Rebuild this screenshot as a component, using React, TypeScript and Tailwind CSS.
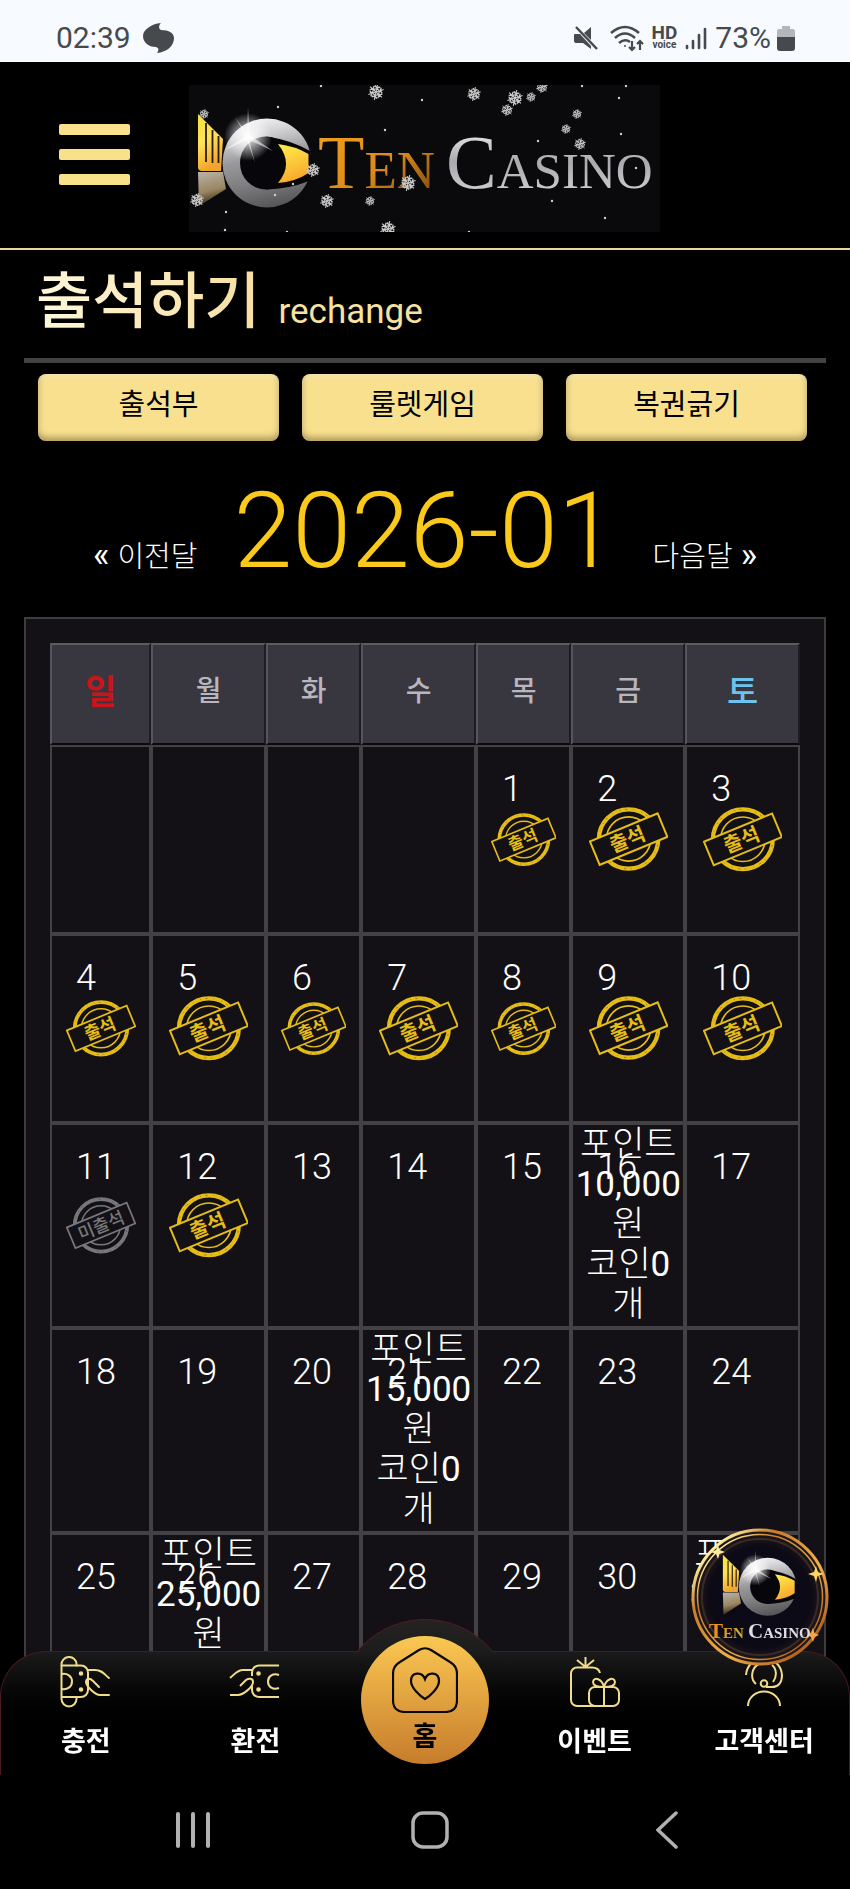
import React from 'react';

type Stamp = 'attend' | 'absent';

interface Day {
  day: number | null;
  stamp?: Stamp;
  reward?: string;
}

const blank: Day = { day: null };

const weeks: Day[][] = [
  [
    blank,
    blank,
    blank,
    blank,
    { day: 1, stamp: 'attend' },
    { day: 2, stamp: 'attend' },
    { day: 3, stamp: 'attend' },
  ],
  [4, 5, 6, 7, 8, 9, 10].map((day) => ({ day, stamp: 'attend' as Stamp })),
  [
    { day: 11, stamp: 'absent' },
    { day: 12, stamp: 'attend' },
    { day: 13 },
    { day: 14 },
    { day: 15 },
    { day: 16, reward: '10,000' },
    { day: 17 },
  ],
  [
    { day: 18 },
    { day: 19 },
    { day: 20 },
    { day: 21, reward: '15,000' },
    { day: 22 },
    { day: 23 },
    { day: 24 },
  ],
  [
    { day: 25 },
    { day: 26, reward: '25,000' },
    { day: 27 },
    { day: 28 },
    { day: 29 },
    { day: 30 },
    { day: 31, reward: '30,000' },
  ],
];

const weekdays = [
  { label: '일', className: 'w-[13.5%] text-[34px] font-bold text-[#c8151b]' },
  { label: '월', className: 'w-[15.3%] text-[28px] font-medium text-[#b9b7bd]' },
  { label: '화', className: 'w-[12.7%] text-[28px] font-medium text-[#b9b7bd]' },
  { label: '수', className: 'w-[15.3%] text-[28px] font-medium text-[#b9b7bd]' },
  { label: '목', className: 'w-[12.7%] text-[28px] font-medium text-[#b9b7bd]' },
  { label: '금', className: 'w-[15.2%] text-[28px] font-medium text-[#b9b7bd]' },
  { label: '토', className: 'w-[15.3%] text-[34px] font-medium text-[#6cc3ee]' },
];

const flakes = [
  [15, 29, 5], [8, 115, 7], [187, 7, 8], [285, 9, 7], [326, 13, 8], [318, 25, 6], [342, 12, 5], [353, 2, 6],
  [388, 29, 5], [377, 44, 5], [391, 59, 6], [124, 85, 7], [219, 98, 8], [138, 116, 7], [181, 116, 5], [199, 144, 8],
];

const specks = [
  [132, 1], [89, 22], [196, 45], [233, 15], [430, 13], [432, 49], [447, 83], [363, 116], [416, 133], [349, 56],
  [86, 110], [37, 127], [36, 145], [104, 99], [98, 147], [280, 147], [393, 1], [437, 1],
];

// Snowflakes drifting over the logo
const Flake = ({ x, y, r }: { x: number; y: number; r: number }) => (
  <g transform={`translate(${x} ${y}) scale(${r / 10})`} stroke="#c9c9c9" strokeWidth="1.5" fill="none">
    {[0, 60, 120, 180, 240, 300].map((a) => (
      <path key={a} d="M0 0V-10M0 -5L-3 -8M0 -5L4 -7M-2 -2L-5 -4" transform={`rotate(${a + 12})`} />
    ))}
    <circle r="4" strokeDasharray="3 1" />
    <circle r="7" strokeDasharray="2 3" />
  </g>
);

const Fish = ({ id }: { id: string }) => (
  <g>
    <defs>
      <linearGradient id={`${id}-tail`} x1="0" y1="0" x2="0.3" y2="1">
        <stop offset="0" stopColor="#f3e43c" />
        <stop offset="0.5" stopColor="#ffe35a" />
        <stop offset="1" stopColor="#f0a62c" />
      </linearGradient>
      <linearGradient id={`${id}-fin`} x1="0" y1="0" x2="0.2" y2="1">
        <stop offset="0" stopColor="#b9b3a8" />
        <stop offset="0.6" stopColor="#9a8763" />
        <stop offset="1" stopColor="#3a2c14" />
      </linearGradient>
      <linearGradient id={`${id}-ring`} x1="0.3" y1="0" x2="0.5" y2="1">
        <stop offset="0" stopColor="#f4f4f4" />
        <stop offset="0.2" stopColor="#cfcfd1" />
        <stop offset="0.45" stopColor="#99999c" />
        <stop offset="0.7" stopColor="#808083" />
        <stop offset="1" stopColor="#565659" />
      </linearGradient>
      <radialGradient id={`${id}-glow`}>
        <stop offset="0" stopColor="#fff" />
        <stop offset="0.35" stopColor="#fff" stopOpacity="0.65" />
        <stop offset="1" stopColor="#fff" stopOpacity="0" />
      </radialGradient>
      <linearGradient id={`${id}-eye`} x1="0" y1="0" x2="0.3" y2="1">
        <stop offset="0" stopColor="#fff04c" />
        <stop offset="1" stopColor="#f8a92e" />
      </linearGradient>
    </defs>
    <path d="M9 29L34 54L32 86H13Q9 86 9 82Z" fill={`url(#${id}-tail)`} />
    <path d="M17 38V77M23.500 45V78M29.500 51V78" stroke="#2a1c06" strokeWidth="1.800" />
    <path d="M9 87H34L37 104L10 121Z" fill={`url(#${id}-fin)`} />
    <circle cx="78" cy="78" r="44.5" fill={`url(#${id}-ring)`} />
    <ellipse cx="77" cy="78" rx="26" ry="26.500" fill="#07060a" />
    <path d="M77 51.500Q102 55 121 66L124 78L120 96Q100 104 77 104.500Z" fill="#07060a" />
    <path d="M89 59Q106 61 119.500 69V88Q106 97 89 98Q105 79 89 59Z" fill={`url(#${id}-eye)`} />
    <circle cx="59" cy="52" r="24" fill={`url(#${id}-glow)`} />
    <path d="M59 22L60.500 50L84 66L60 55L66 78L58 55L34 66L57 51L46 32L58 49Z" fill="#fff" opacity="0.55" />
  </g>
);

const Logo = () => (
  <svg viewBox="0 0 471 147" className="w-full max-w-[471px] bg-[#0a090c]" role="img" aria-label="Ten Casino">
    <defs>
      <linearGradient id="logo-ten" x1="0" y1="0" x2="1" y2="1">
        <stop offset="0" stopColor="#f2a41f" />
        <stop offset="0.55" stopColor="#dc8a18" />
        <stop offset="1" stopColor="#6f430b" />
      </linearGradient>
      <linearGradient id="logo-casino" x1="0" y1="0" x2="0" y2="1">
        <stop offset="0" stopColor="#ffffff" />
        <stop offset="0.5" stopColor="#a9a9ad" />
        <stop offset="1" stopColor="#dcdcde" />
      </linearGradient>
    </defs>
    <Fish id="logo" />
    <g fontFamily="'Liberation Serif', serif">
      <text x="129" y="103" fontSize="76" fill="url(#logo-ten)">
        T<tspan fontSize="53">EN</tspan>
      </text>
      <text x="257" y="103" fontSize="76" fill="url(#logo-casino)">
        C<tspan fontSize="51">ASINO</tspan>
      </text>
    </g>
    {flakes.map(([x, y, r]) => (
      <Flake key={`${x}-${y}`} x={x} y={y} r={r} />
    ))}
    {specks.map(([x, y]) => (
      <circle key={`${x}-${y}`} cx={x} cy={y} r="1.2" fill="#cfcfcf" />
    ))}
  </svg>
);

const StampMark = ({ type }: { type: Stamp }) => {
  const color = type === 'attend' ? '#e6bd17' : '#78777b';
  return (
    <svg
      viewBox="0 0 240 195"
      className="mx-auto block w-[72%]"
      role="img"
      aria-label={type === 'attend' ? '출석' : '미출석'}
    >
      <circle cx="120" cy="97" r="90" fill="none" stroke={color} strokeWidth="13" />
      <circle
        cx="120"
        cy="97"
        r="90"
        fill="none"
        stroke="#131115"
        strokeWidth="3"
        strokeDasharray="3 14 6 19 2 22"
        opacity="0.4"
      />
      <circle cx="120" cy="97" r="67" fill="none" stroke={color} strokeWidth="5" />
      <g transform="rotate(-22.5 120 97)">
        <rect x="9" y="59" width="222" height="77" fill="#131115" stroke={color} strokeWidth="6" />
        <text
          x={type === 'attend' ? 116 : 120}
          y={type === 'attend' ? 118 : 119}
          textAnchor="middle"
          fontSize="60"
          fontWeight={type === 'attend' ? 700 : 500}
          fill={color}
        >
          {type === 'attend' ? '출석' : '미출석'}
        </text>
      </g>
    </svg>
  );
};

const StatusBar = () => (
  <div className="flex h-[62px] items-center justify-between bg-[#f7fafe] pr-[55px] pl-14 pt-3.5 text-[30px] leading-none text-[#474a4d]">
    <div className="flex items-center gap-3">
      <span>02:39</span>
      <svg viewBox="0 0 32 30" className="h-[30px] w-8" fill="currentColor">
        <path d="M18 0C15 3 16 6 18 7C26 7 31 10 31 15C31 23 24 29 14 30C16 27 16 25 13 24C5 24 0 19 0 13C0 7 8 1 18 0Z" />
      </svg>
    </div>
    <div className="flex items-center gap-2">
      <svg viewBox="0 0 24 24" className="mr-1 size-6" fill="currentColor">
        <path d="M0 9Q0 8 1 8H6L17 20V23L9 17H2Q0 17 0 15Z" />
        <path d="M10 7L17 1V14Z" />
        <path d="M2 1L23 23" stroke="currentColor" strokeWidth="2.500" />
      </svg>
      <svg viewBox="0 0 34 27" className="h-[27px] w-[34px]" fill="none" stroke="currentColor" strokeWidth="2.600">
        <path d="M1 8Q15 -4 29 8M5 13Q15 4 25 13M9 18Q15 13 20 17" />
        <circle cx="15" cy="21" r="1" fill="currentColor" stroke="none" />
        <path d="M22 16V25M19 22L22 25L25 22M30 25V16M27 19L30 16L33 19" strokeWidth="2.200" />
      </svg>
      <div className="flex flex-col items-center font-bold">
        <span className="text-[19px] leading-[14px]">HD</span>
        <span className="text-[10px] leading-[10px]">voice</span>
      </div>
      <svg viewBox="0 0 22 23" className="h-[23px] w-[22px]" stroke="currentColor" strokeWidth="2.600" strokeLinecap="round">
        <path d="M2 19V21M8 14V21M14 8V21M20 2V21" />
      </svg>
      <div className="flex items-center gap-1.5">
        <span>73%</span>
        <svg viewBox="0 0 18 25" className="h-[25px] w-[18px]">
          <path d="M5 0H13V3H16Q18 3 18 6V11H0V6Q0 3 2 3H5Z" fill="#b3b6ba" />
          <path d="M0 11H18V22Q18 25 15 25H3Q0 25 0 22Z" fill="currentColor" />
        </svg>
      </div>
    </div>
  </div>
);

const DayCell: React.FC<Day> = ({ day, stamp, reward }) => (
  <td className="relative border-2 border-[#444145] p-0 align-middle">
    {day && <span className="absolute top-[22px] left-6 text-[36px] leading-10 font-light">{day}</span>}
    {stamp && <StampMark type={stamp} />}
    {reward && (
      <div className="pb-px text-center text-[35px] leading-10 font-light">
        <p>포인트</p>
        <p className="font-normal">{reward}</p>
        <p>원</p>
        <p>
          코인<b className="font-normal">0</b>
        </p>
        <p>개</p>
      </div>
    )}
  </td>
);

const iconClass = 'size-[52px] fill-none stroke-[#f0dc8c] stroke-2';

const DepositIcon = () => (
  <svg viewBox="0 0 52 52" className={iconClass} strokeLinecap="round">
    <path d="M1.500 43V9A7.500 7.500 0 0 1 16.500 8V9.500M1.500 43A7.500 7.500 0 0 0 16.500 43V41" />
    <path d="M2 9.500H21A7 7 0 0 1 28 16.500V34A7 7 0 0 1 21 41H2" />
    <path d="M2 18C7 17 12 20 12 25.500S7 34 2 33" />
    <path d="M28 14H35C42 14 44 18 49 22M49 39H40C35 39 26 30 26 26C26 22 30 22 33 25L39 31" />
    <circle cx="21" cy="17.500" r="1.300" fill="#f0dc8c" />
    <circle cx="21" cy="33.500" r="1.300" fill="#f0dc8c" />
  </svg>
);

const WithdrawIcon = () => (
  <svg viewBox="0 0 52 52" className={iconClass}>
    <path d="M50 9.500H30A7 7 0 0 0 23 16.500V20M23 30V34A7 7 0 0 0 30 41H50" />
    <path d="M50 19C44 17 39 20 39 25.500S44 34 50 32" />
    <path d="M1 22C6 18 8 14 14 14H23M1 39H9C14 39 24 31 24 26C24 22 20 22 17 24L11 30" />
    <circle cx="29.500" cy="17.500" r="1.300" fill="#f0dc8c" />
    <circle cx="29.500" cy="33.500" r="1.300" fill="#f0dc8c" />
  </svg>
);

const EventIcon = () => (
  <svg viewBox="0 0 52 52" className={iconClass}>
    <path d="M31 17C30 13 27 11.500 23 11.500H8A6 6 0 0 0 2 17.500V44A6 6 0 0 0 8 50H26M16.500 11V1M16.500 11L8 4M16.500 11L25 4" />
    <rect x="20" y="31" width="30" height="19" rx="6" />
    <path d="M35 31V50M35 31C33 23 25 20 24 26C24 29 27 31 35 31C43 31 46 29 46 26C45 20 37 23 35 31Z" />
  </svg>
);

const SupportIcon = () => (
  <svg viewBox="0 0 52 52" className={iconClass}>
    <path d="M8 19A18 18 0 0 1 26 2A18 18 0 0 1 44 19C44 27 40 31 34 31H28" />
    <path d="M18 28C12 23 13 12 21 8M35 26C39 21 39 13 34 9" />
    <circle cx="26" cy="27.500" r="3.300" />
    <path d="M10 50A16 14.500 0 0 1 42 50" />
  </svg>
);

const FloatingBadge = () => (
  <a href="#chat" aria-label="Ten Casino" className="fixed right-[21px] bottom-[223px] z-20 size-[138px]">
    <svg viewBox="0 0 138 138" className="size-full">
      <defs>
        <linearGradient id="badge-rim" x1="0" y1="0" x2="1" y2="1">
          <stop offset="0" stopColor="#b5651d" />
          <stop offset="0.14" stopColor="#fff2a0" />
          <stop offset="0.3" stopColor="#c77b2c" />
          <stop offset="0.6" stopColor="#f0b04a" />
          <stop offset="0.85" stopColor="#b5651d" />
          <stop offset="1" stopColor="#ffe38a" />
        </linearGradient>
        <radialGradient id="badge-face">
          <stop offset="0" stopColor="#0b0918" />
          <stop offset="0.75" stopColor="#0d0a16" />
          <stop offset="1" stopColor="#241c1d" />
        </radialGradient>
        <linearGradient id="badge-ten" x1="0" y1="0" x2="1" y2="0">
          <stop offset="0" stopColor="#ee8a1e" />
          <stop offset="1" stopColor="#c9b02c" />
        </linearGradient>
      </defs>
      <circle cx="69" cy="69" r="67" fill="url(#badge-face)" stroke="url(#badge-rim)" strokeWidth="3" />
      <circle cx="69" cy="69" r="62.500" fill="none" stroke="url(#badge-rim)" strokeWidth="1.500" />
      <circle cx="69" cy="69" r="58" fill="none" stroke="#3a2c25" strokeWidth="2" />
      <g transform="translate(26 8) scale(0.65)">
        <Fish id="badge" />
      </g>
      <path d="M125 38L126.500 44L133 46L126.500 48L125 54L123 48L117 46L123 44Z" fill="#ffd75a" />
      <path d="M27 17L28.500 22L34 24L28.500 26L27 31L25 26L20 24L25 22Z" fill="#ffe9a0" />
      <path d="M122 100L123.500 105L128 107L123.500 109L122 114L120 109L116 107L120 105Z" fill="#f6a640" />
      <g fontFamily="'Liberation Serif', serif" fontWeight="700">
        <text x="18" y="110" fontSize="21" fill="url(#badge-ten)">
          T<tspan fontSize="15">EN</tspan>
        </text>
        <text x="57" y="110" fontSize="21" fill="#dcdce2">
          C<tspan fontSize="15">ASINO</tspan>
        </text>
      </g>
    </svg>
  </a>
);

const NavItem = ({ label, children }: { label: string; children: React.ReactNode }) => (
  <button type="button" className="flex flex-col items-center pt-1">
    {children}
    <span className="mt-3.5 text-[27px] leading-10 font-bold">{label}</span>
  </button>
);

const BottomNav = () => (
  <nav className="fixed inset-x-0 bottom-0 z-10">
    {/* raised bump behind the home button */}
    <div className="relative z-10 mx-auto -mb-px h-[33px] w-[176px] overflow-hidden">
      <div className="size-[176px] rounded-full border border-[#551d23] bg-linear-to-b from-[#242322] to-[#181818] to-30%" />
    </div>
    <div className="h-[124px] rounded-t-[46px] border border-b-0 border-[#4a1a20] bg-linear-to-b from-[#1a1b1a] to-black to-75%">
      <div className="grid grid-cols-5">
        <NavItem label="충전">
          <DepositIcon />
        </NavItem>
        <NavItem label="환전">
          <WithdrawIcon />
        </NavItem>
        <div />
        <NavItem label="이벤트">
          <EventIcon />
        </NavItem>
        <NavItem label="고객센터">
          <SupportIcon />
        </NavItem>
      </div>
    </div>
    <button
      type="button"
      className="absolute top-[17px] left-1/2 z-20 flex size-[128px] -translate-x-1/2 flex-col items-center rounded-full bg-linear-to-b from-[#fbc852] to-[#c67c2c] pt-[11px] text-black"
    >
      <svg viewBox="0 0 66 66" className="size-[66px]" fill="none" stroke="#0c0806" strokeWidth="2.200">
        <path d="M27 3Q33 -0.500 39 3L58 15Q65 19 65 27V53Q65 65 53 65H13Q1 65 1 53V27Q1 19 8 15Z" />
        <path d="M33 52C28 49 19 41 19 34C19 25 30 24 33 32C36 24 47 25 47 34C47 41 38 49 33 52Z" />
      </svg>
      <span className="mt-1 text-[27px] leading-10 font-bold">홈</span>
    </button>
    <div className="grid h-[114px] grid-cols-3 items-center justify-items-center bg-black pr-16 pb-1 pl-[74px] text-[#b3b0b4]">
      <button type="button" aria-label="Recents">
        <svg viewBox="0 0 36 38" className="h-[38px] w-9" stroke="currentColor" strokeWidth="4" strokeLinecap="round">
          <path d="M3 3V35M18 3V35M33 3V35" />
        </svg>
      </button>
      <button type="button" aria-label="Home">
        <svg viewBox="0 0 38 38" className="size-[38px]" fill="none" stroke="currentColor" strokeWidth="3.500">
          <rect x="2" y="2" width="34" height="34" rx="10" />
        </svg>
      </button>
      <button type="button" aria-label="Back">
        <svg viewBox="0 0 22 38" className="h-[38px] w-[22px]" fill="none" stroke="currentColor" strokeWidth="3.500" strokeLinecap="round">
          <path d="M20 2L2 19L20 36" />
        </svg>
      </button>
    </div>
  </nav>
);

export default function App() {
  return (
    <div className="min-h-screen bg-black font-['Roboto','Noto_Sans_CJK_KR',sans-serif] text-white" lang="ko">
      <StatusBar />

      <header className="flex items-center gap-[59px] border-b-2 border-[#e8d59f] px-[59px] pt-[23px] pb-4">
        <button type="button" aria-label="메뉴" className="flex w-[71px] shrink-0 flex-col gap-3.5 pb-2">
          <span className="h-[11px] rounded-xs bg-[#fae08b]" />
          <span className="h-[11px] rounded-xs bg-[#fae08b]" />
          <span className="h-[11px] rounded-xs bg-[#fae08b]" />
        </button>
        <Logo />
      </header>

      <main className="px-6 pb-32">
        <h1 className="flex h-[108px] items-baseline gap-[18px] pl-3 leading-[104px]">
          <span className="bg-linear-to-r from-[#fdf7da] to-[#f8dfa0] bg-clip-text text-[61px] font-medium text-transparent">
            출석하기
          </span>
          <small className="text-[35px] text-[#f7e2a0]">rechange</small>
        </h1>
        <hr className="border-t-[5px] border-[#444244]" />

        <div className="mt-[11px] grid grid-cols-3 gap-[23px] pr-[19px] pl-3.5">
          {['출석부', '룰렛게임', '복권긁기'].map((label) => (
            <button
              key={label}
              type="button"
              className="h-[67px] rounded-lg bg-[#f8e08f] pb-1 text-[29px] leading-none text-black shadow-[inset_0_-4px_6px_rgba(90,70,30,0.45),inset_0_3px_5px_rgba(255,255,255,0.3)]"
            >
              {label}
            </button>
          ))}
        </div>

        <div className="flex h-[176px] items-baseline justify-center gap-9 pt-[30px] text-[29px] leading-[120px] font-light">
          <button type="button" className="flex items-baseline gap-2">
            <span className="text-[35px] font-normal">«</span>이전달
          </button>
          <h2 className="text-[106px]">
            <span className="text-[#fbc91a]">2026-01</span>
          </h2>
          <button type="button" className="flex items-baseline gap-2">
            다음달<span className="text-[35px] font-normal">»</span>
          </button>
        </div>

        <section className="border-2 border-[#3f3c40] bg-[#131115] p-6">
          <table className="w-full table-fixed border-separate border-spacing-0">
            <thead>
              <tr className="h-[102px]">
                {weekdays.map(({ label, className }) => (
                  <th
                    key={label}
                    scope="col"
                    className={`${className} border-2 border-t-[#5d5b63] border-r-[#1d1b23] border-b-[#0c0a10] border-l-[#56545c] bg-[#38363f] p-0 pb-1 leading-10`}
                  >
                    {label}
                  </th>
                ))}
              </tr>
            </thead>
            <tbody>
              {weeks.map((week, i) => (
                <tr key={i} className="h-[189px]">
                  {week.map((item, j) => (
                    <DayCell key={j} {...item} />
                  ))}
                </tr>
              ))}
            </tbody>
          </table>
        </section>
      </main>

      <BottomNav />
      <FloatingBadge />
    </div>
  );
}
